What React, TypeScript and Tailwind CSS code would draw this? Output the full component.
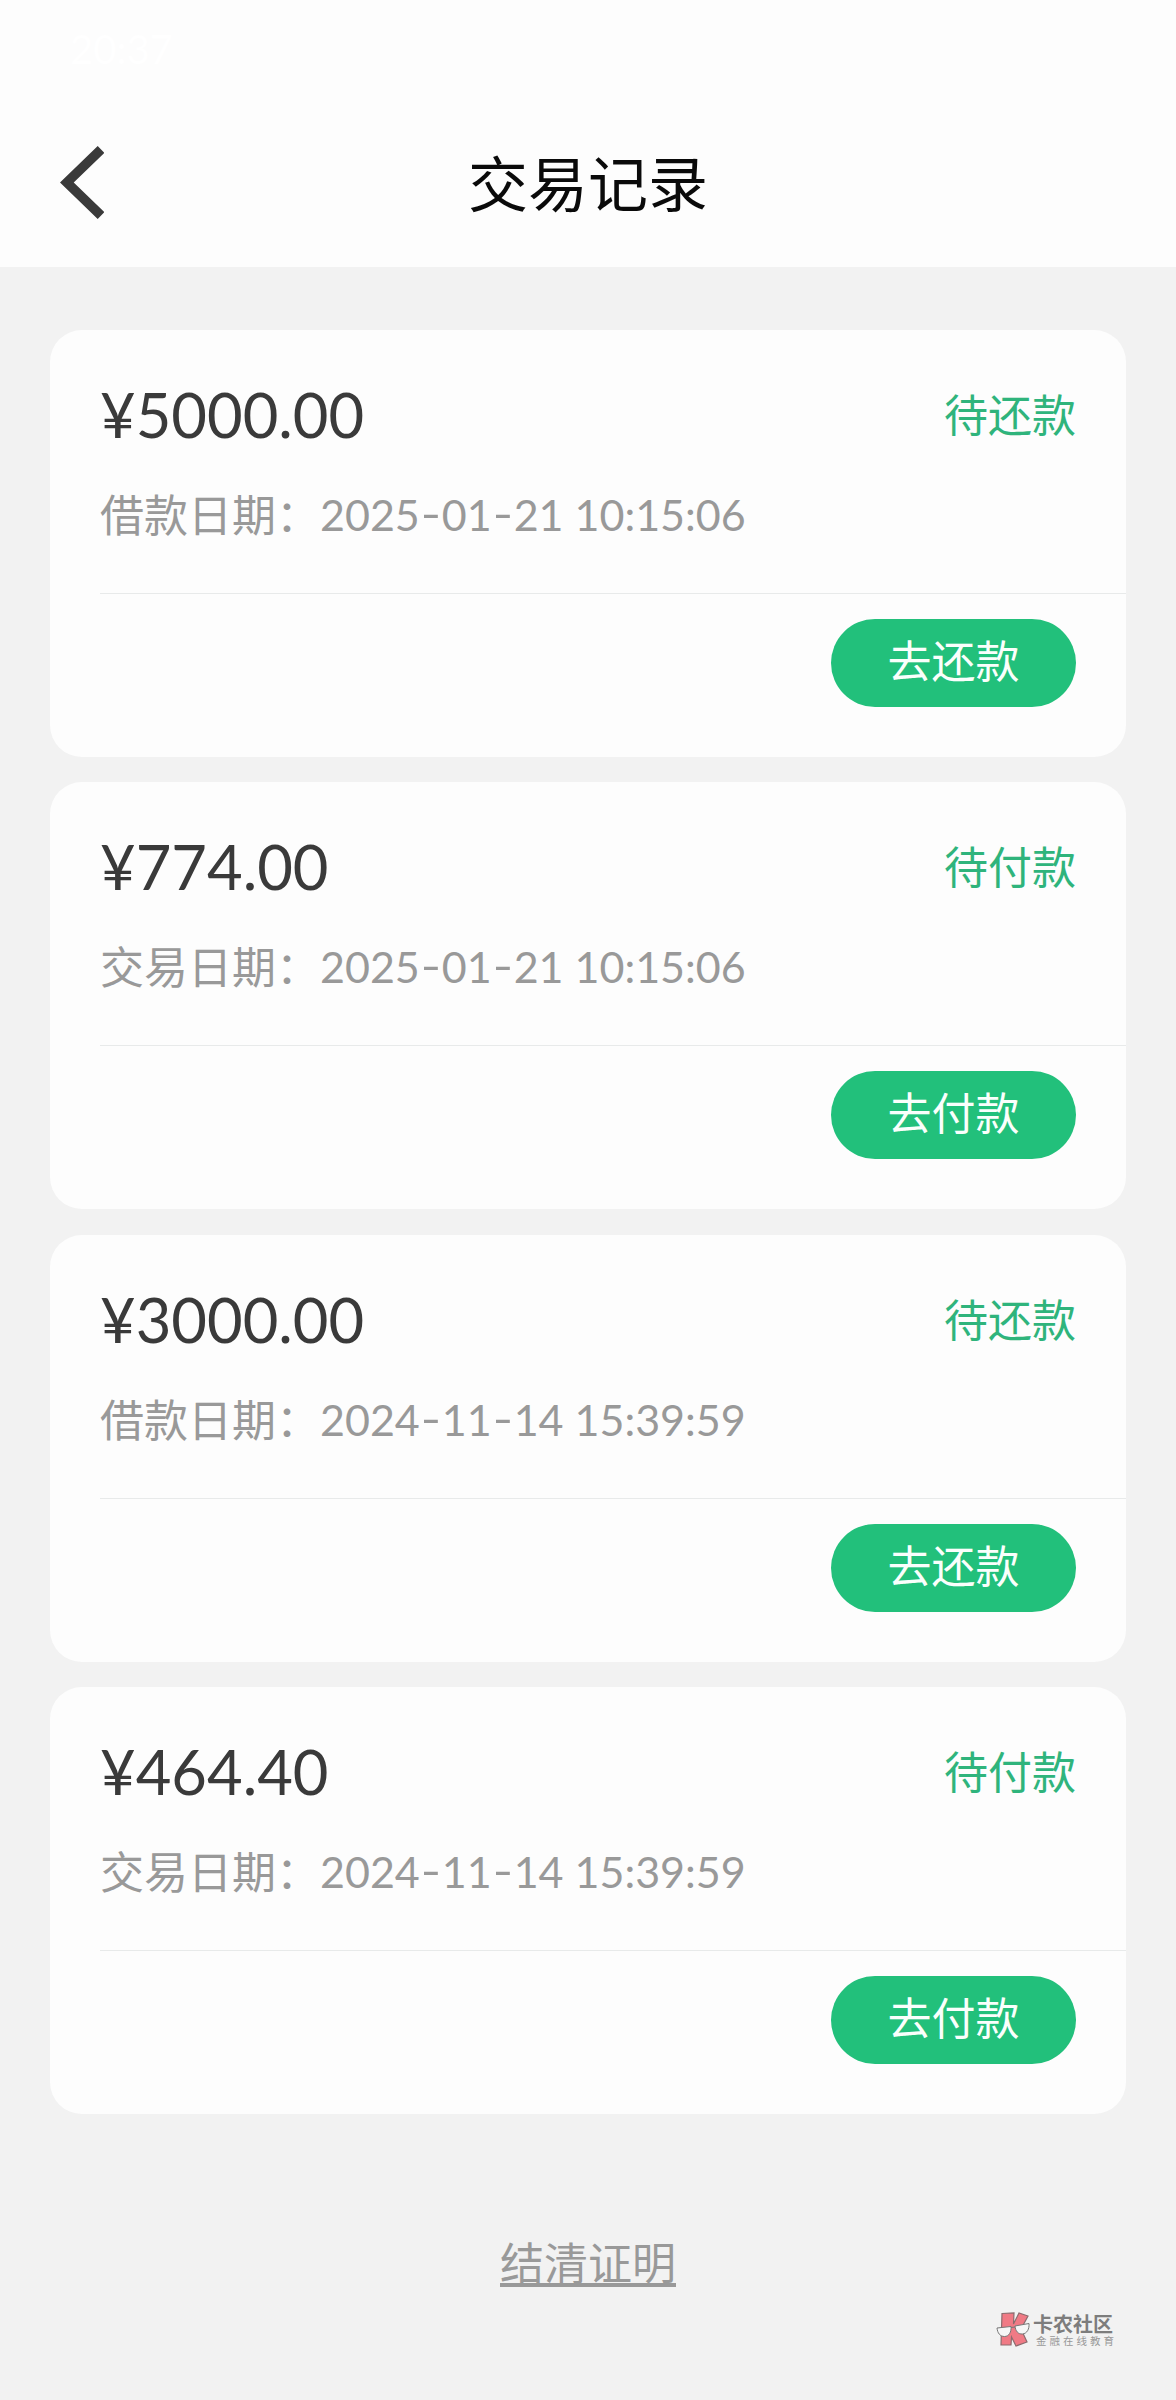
// src/App.tsx
type RecordItem = {
  amount: string;
  status: string;
  dateLabel: string;
  date: string;
  action: string;
};

const records: RecordItem[] = [
  { amount: "5000.00", status: "待还款", dateLabel: "借款日期", date: "2025-01-21 10:15:06", action: "去还款" },
  { amount: "774.00", status: "待付款", dateLabel: "交易日期", date: "2025-01-21 10:15:06", action: "去付款" },
  { amount: "3000.00", status: "待还款", dateLabel: "借款日期", date: "2024-11-14 15:39:59", action: "去还款" },
  { amount: "464.40", status: "待付款", dateLabel: "交易日期", date: "2024-11-14 15:39:59", action: "去付款" },
];

function Header() {
  return (
    <header className="h-[267px] bg-[#fdfdfd]">
      {/* Status bar */}
      <div className="flex h-[98px] items-center justify-between px-[70px] text-[40px] leading-none text-white">
        <span>20:37</span>
      </div>

      {/* Title bar */}
      <div className="grid h-[169px] grid-cols-[1fr_auto_1fr] items-start">
        <button aria-label="返回" className="mt-12 ml-[60px] block w-11">
          <svg width="44" height="73" viewBox="0 0 44 73" fill="none">
            <path d="M41 3.5 L6.8 36.5 L41 69.5" stroke="#3a3a3a" strokeWidth="9.5" />
          </svg>
        </button>
        <h1 className="mt-[56px] text-[60px] leading-[60px] text-[#0a0a0a]">交易记录</h1>
      </div>
    </header>
  );
}

// Date with wide, slightly raised dashes
function DateText({ value }: { value: string }) {
  return (
    <span className="text-[43px] whitespace-pre">
      {value.split("-").map((part, i) => (
        <span key={i}>
          {i > 0 && <span className="mx-[3px] inline-block -translate-y-0.5 scale-x-130">-</span>}
          {part}
        </span>
      ))}
    </span>
  );
}

function RecordCard({ item }: { item: RecordItem }) {
  return (
    <section className="h-[427px] rounded-[32px] bg-[#fdfdfd] pl-[50px]">
      <div className="h-[264px] border-b border-[#e8eaea] pr-[50px]">
        <div className="flex items-start justify-between pt-[52px]">
          <p className="text-[61.5px] leading-[64px] text-[#3a3a3a]">¥{item.amount}</p>
          <p className="mt-[11px] text-[44px] leading-[44px] text-[#2fb47c]">{item.status}</p>
        </div>
        <p className="mt-[47px] flex text-[44px] leading-[44px] text-[#999]">
          <span>{item.dateLabel}：</span>
          <DateText value={item.date} />
        </p>
      </div>
      <div className="flex justify-end pt-[25px] pr-[50px]">
        <button className="h-[88px] w-[245px] rounded-full bg-[#22c07b] pb-1 text-[44px] leading-[44px] text-[#fafffc]">
          {item.action}
        </button>
      </div>
    </section>
  );
}

function Watermark() {
  return (
    <div className="flex items-start gap-1 pl-[996px]">
      <svg width="34" height="36" viewBox="0 0 34 36" fill="none">
        <path d="M6 1.5 L18 1 L17.500 12 L23 1 L32 4 L25 17 L31 30 L20 34 L15.500 25 L15 33 L5 33 Z" fill="#f07a85" stroke="#8c6b6e" strokeWidth="1.200" />
        <path d="M1 16 L15 14.500 C15.500 20 13 24.500 8.500 24.500 C4 24.500 1.500 21 1 16 Z" fill="#f6f6f6" stroke="#777" strokeWidth="1" />
        <path d="M19 14 L33 11.500 C33.500 17 31 21.500 26.500 22 C22 22.300 19.500 19 19 14 Z" fill="#f6f6f6" stroke="#777" strokeWidth="1" />
        <path d="M15 15.500 L19 15" stroke="#777" />
      </svg>
      <div className="flex flex-col">
        <span className="mt-0.5 -ml-px text-[20px] leading-[20px] font-bold text-[#7d7d7d]">卡农社区</span>
        <span className="mt-px ml-0.5 text-[10.5px] leading-[12px] tracking-[3px] text-[#999]">金融在线教育</span>
      </div>
    </div>
  );
}

export default function App() {
  return (
    <div className="h-[2400px] w-[1176px] overflow-hidden bg-[#f2f2f2] font-['Lato','Noto_Sans_CJK_SC',sans-serif]">
      <Header />

      <main className="flex flex-col gap-[25.3px] px-[50px] pt-[63px]">
        {records.map((item, i) => (
          <RecordCard key={i} item={item} />
        ))}
      </main>

      {/* Settlement proof link */}
      <div className="mt-[127px] flex justify-center">
        <a href="#" className="block h-[46px] border-b-4 border-[#999] text-[44px] leading-[44px] text-[#999]">
          结清证明
        </a>
      </div>

      <div className="mt-[25px]">
        <Watermark />
      </div>
    </div>
  );
}
